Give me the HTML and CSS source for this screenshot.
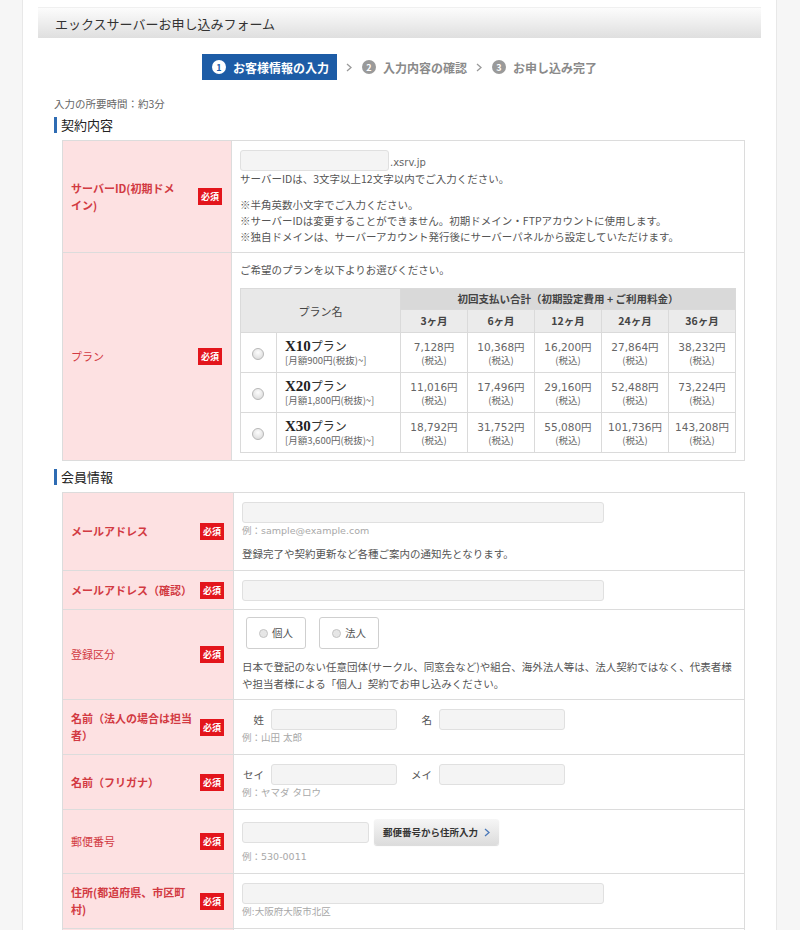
FILE: index.html
```html
<!DOCTYPE html>
<html lang="ja">
<head>
<meta charset="utf-8">
<title>エックスサーバーお申し込みフォーム</title>
<link rel="stylesheet" href="styles.css">
</head>
<body>
<div class="page">
  <main class="panel">
    <h1 class="titlebar">エックスサーバーお申し込みフォーム</h1>

    <ol class="steps">
      <li class="step current"><span class="num">1</span>お客様情報の入力</li>
      <li class="sep"><svg width="6" height="9" viewBox="0 0 6 9"><polyline points="1,1 5,4.5 1,8" fill="none" stroke="#9a9a9a" stroke-width="1.3"/></svg></li>
      <li class="step"><span class="num">2</span>入力内容の確認</li>
      <li class="sep"><svg width="6" height="9" viewBox="0 0 6 9"><polyline points="1,1 5,4.5 1,8" fill="none" stroke="#9a9a9a" stroke-width="1.3"/></svg></li>
      <li class="step"><span class="num">3</span>お申し込み完了</li>
    </ol>

    <p class="time">入力の所要時間：約3分</p>

    <h2 class="sec">契約内容</h2>
    <table class="form">
      <tr class="r-server">
        <th><div class="lbl"><span class="lbl-text">サーバーID(初期ドメ<br>イン)</span><span class="req">必須</span></div></th>
        <td>
          <div class="inline"><input class="text w149" type="text"><span class="domain">.xsrv.jp</span></div>
          <p>サーバーIDは、3文字以上12文字以内でご入力ください。</p>
          <ul class="notes">
            <li>※半角英数小文字でご入力ください。</li>
            <li>※サーバーIDは変更することができません。初期ドメイン・FTPアカウントに使用します。</li>
            <li>※独自ドメインは、サーバーアカウント発行後にサーバーパネルから設定していただけます。</li>
          </ul>
        </td>
      </tr>
      <tr>
        <th><div class="lbl"><span class="lbl-text normal">プラン</span><span class="req">必須</span></div></th>
        <td class="plan-cell">
          <p>ご希望のプランを以下よりお選びください。</p>
          <table class="plan">
            <colgroup><col class="c-radio"><col class="c-name"><col class="c-p"><col class="c-p"><col class="c-p"><col class="c-p"><col class="c-p"></colgroup>
            <thead>
              <tr class="h1"><th colspan="2" rowspan="2" class="pname">プラン名</th><th colspan="5" class="group">初回支払い合計（初期設定費用&nbsp;+&nbsp;ご利用料金）</th></tr>
              <tr class="h2"><th>3ヶ月</th><th>6ヶ月</th><th>12ヶ月</th><th>24ヶ月</th><th>36ヶ月</th></tr>
            </thead>
            <tbody>
              <tr>
                <td class="rad"><span class="radio"></span></td>
                <td class="name"><div><b class="x">X10</b><span class="pl-name">プラン</span></div><div class="sub">[月額900円(税抜)~]</div></td>
                <td class="price">7,128円<span>(税込)</span></td>
                <td class="price">10,368円<span>(税込)</span></td>
                <td class="price">16,200円<span>(税込)</span></td>
                <td class="price">27,864円<span>(税込)</span></td>
                <td class="price">38,232円<span>(税込)</span></td>
              </tr>
              <tr>
                <td class="rad"><span class="radio"></span></td>
                <td class="name"><div><b class="x">X20</b><span class="pl-name">プラン</span></div><div class="sub">[月額1,800円(税抜)~]</div></td>
                <td class="price">11,016円<span>(税込)</span></td>
                <td class="price">17,496円<span>(税込)</span></td>
                <td class="price">29,160円<span>(税込)</span></td>
                <td class="price">52,488円<span>(税込)</span></td>
                <td class="price">73,224円<span>(税込)</span></td>
              </tr>
              <tr>
                <td class="rad"><span class="radio"></span></td>
                <td class="name"><div><b class="x">X30</b><span class="pl-name">プラン</span></div><div class="sub">[月額3,600円(税抜)~]</div></td>
                <td class="price">18,792円<span>(税込)</span></td>
                <td class="price">31,752円<span>(税込)</span></td>
                <td class="price">55,080円<span>(税込)</span></td>
                <td class="price">101,736円<span>(税込)</span></td>
                <td class="price">143,208円<span>(税込)</span></td>
              </tr>
            </tbody>
          </table>
        </td>
      </tr>
    </table>

    <h2 class="sec sec2">会員情報</h2>
    <table class="form member">
      <tr>
        <th><div class="lbl"><span class="lbl-text">メールアドレス</span><span class="req">必須</span></div></th>
        <td>
          <input class="text w362" type="text">
          <p class="ex">例：sample@example.com</p>
          <p class="desc">登録完了や契約更新など各種ご案内の通知先となります。</p>
        </td>
      </tr>
      <tr>
        <th><div class="lbl"><span class="lbl-text">メールアドレス（確認）</span><span class="req">必須</span></div></th>
        <td><input class="text w362" type="text"></td>
      </tr>
      <tr>
        <th><div class="lbl"><span class="lbl-text normal">登録区分</span><span class="req">必須</span></div></th>
        <td class="kind">
          <div class="choices">
            <label class="choice"><span class="dot"></span>個人</label>
            <label class="choice"><span class="dot"></span>法人</label>
          </div>
          <p class="kind-note">日本で登記のない任意団体(サークル、同窓会など)や組合、海外法人等は、法人契約ではなく、代表者様<br>や担当者様による「個人」契約でお申し込みください。</p>
        </td>
      </tr>
      <tr>
        <th><div class="lbl"><span class="lbl-text">名前（法人の場合は担当<br>者）</span><span class="req">必須</span></div></th>
        <td>
          <div class="pair"><span class="pl">姓</span><input class="text w126" type="text"><span class="pl pl2">名</span><input class="text w126" type="text"></div>
          <p class="ex">例：山田 太郎</p>
        </td>
      </tr>
      <tr>
        <th><div class="lbl"><span class="lbl-text">名前（フリガナ）</span><span class="req">必須</span></div></th>
        <td>
          <div class="pair"><span class="pl">セイ</span><input class="text w126" type="text"><span class="pl pl2">メイ</span><input class="text w126" type="text"></div>
          <p class="ex">例：ヤマダ タロウ</p>
        </td>
      </tr>
      <tr>
        <th><div class="lbl"><span class="lbl-text normal">郵便番号</span><span class="req">必須</span></div></th>
        <td>
          <div class="zip"><input class="text w127" type="text"><button class="zipbtn" type="button">郵便番号から住所入力<svg width="6" height="9" viewBox="0 0 6 9"><polyline points="1,1 5,4.5 1,8" fill="none" stroke="#4a78b8" stroke-width="1.3"/></svg></button></div>
          <p class="ex zip-ex">例：530-0011</p>
        </td>
      </tr>
      <tr>
        <th><div class="lbl"><span class="lbl-text">住所(都道府県、市区町<br>村)</span><span class="req">必須</span></div></th>
        <td>
          <input class="text w362" type="text">
          <p class="ex">例:大阪府大阪市北区</p>
        </td>
      </tr>
      <tr class="next">
        <th></th>
        <td></td>
      </tr>
    </table>
  </main>
</div>
</body>
</html>
```

FILE: styles.css
```css
* { box-sizing: border-box; }
html, body { margin: 0; padding: 0; }
body {
  background: #fff;
  font-family: "Noto Sans CJK JP", "Noto Sans", sans-serif;
  color: #555;
}
.page {
  height: 930px;
  overflow: hidden;
  background: #f6f6f6;
}
.panel {
  display: block;
  margin-left: 22px;
  width: 755px;
  height: 100%;
  background: #fff;
  border-left: 1px solid #e8e8e8;
  border-right: 1px solid #e8e8e8;
  padding: 7px 15px 0 15px;
}
.titlebar {
  margin: 0;
  height: 31px;
  line-height: 31px;
  padding-left: 17px;
  font-size: 13px;
  font-weight: normal;
  color: #333;
  background: linear-gradient(#fcfcfc, #dfdfdf);
  border-top: 1px solid #f0f0f0;
}
.steps {
  list-style: none;
  margin: 16px 0 0;
  padding: 0;
  display: flex;
  justify-content: center;
  align-items: center;
  height: 26px;
}
.step {
  display: flex;
  align-items: center;
  gap: 7px;
  font-size: 12px;
  font-weight: bold;
  color: #8a8a8a;
  height: 26px;
}
.step.current {
  background: #1d5ca6;
  color: #fff;
  padding: 0 8px 0 10px;
}
.num {
  width: 14px;
  height: 14px;
  border-radius: 50%;
  background: #9a9a9a;
  color: #fff;
  font-size: 9px;
  font-weight: bold;
  display: inline-flex;
  align-items: center;
  justify-content: center;
  line-height: 1;
}
.current .num { background: #fff; color: #1d5ca6; }
.sep { display: flex; align-items: center; margin: 0 10px 0 9px; }

.time {
  margin: 17px 0 0;
  padding-left: 16px;
  font-size: 10.5px;
  line-height: 14px;
  color: #666;
}
.sec {
  margin: 6px 0 0 16px;
  font-size: 13px;
  line-height: 16px;
  font-weight: normal;
  color: #222;
  border-left: 3px solid #2f6cb3;
  padding-left: 4px;
}
.sec2 { margin-top: 8px; }

.form {
  margin: 7px 0 0 24px;
  width: 683px;
  border-collapse: collapse;
}
.form > tbody > tr > th,
.form > tr > th {
  width: 171px;
  background: #fde1e2;
  border: 1px solid #dcdcdc;
  padding: 0 9px 0 8px;
  vertical-align: middle;
  text-align: left;
}
.form > tbody > tr > td,
.form > tr > td {
  border: 1px solid #dcdcdc;
  padding: 8px 8px 7px 8px;
  vertical-align: top;
  font-size: 10.5px;
  line-height: 16px;
  color: #555;
}
.form.member > tbody > tr > td,
.form.member > tr > td {
  padding: 9px 8px 8px 8px;
}
.lbl {
  display: flex;
  align-items: center;
  justify-content: space-between;
}
.lbl-text {
  font-size: 11px;
  line-height: 17px;
  font-weight: bold;
  color: #d23a42;
  white-space: nowrap;
}
.lbl-text.normal { font-weight: normal; }
.req {
  display: inline-flex;
  align-items: center;
  justify-content: center;
  width: 24px;
  height: 17px;
  background: #e3151c;
  color: #fff;
  font-size: 9px;
  font-weight: bold;
  flex: none;
}
p { margin: 0; }

.text {
  display: block;
  height: 21px;
  margin: 0;
  padding: 0 6px;
  background: #f4f4f4;
  border: 1px solid #e0e0e0;
  border-radius: 3px;
  font: inherit;
}
.w149 { width: 149px; }
.w362 { width: 362px; }
.w126 { width: 126px; }
.w127 { width: 127px; }

.inline { display: flex; align-items: center; }
.domain {
  font-family: "DejaVu Sans", sans-serif;
  font-size: 10px;
  color: #666;
  margin-left: 1px;
  padding-top: 6px;
}
.notes { list-style: none; margin: 10px 0 0; padding: 0; }

.plan-cell p { margin-top: 1px; }
.plan {
  margin-top: 10px;
  width: 100%;
  border-collapse: collapse;
  table-layout: fixed;
}
.c-radio { width: 36px; }
.c-name { width: 124px; }
.c-p { width: 67px; }
.plan th, .plan td {
  border: 1px solid #dadada;
  text-align: center;
  font-size: 10.5px;
  padding: 0;
}
.plan th { color: #444; }
.plan .pname { background: #e8e8e8; font-weight: normal; font-size: 11px; }
.plan .group { background: #d9d9d9; height: 21px; font-weight: bold; }
.plan .h2 th { background: #ebebeb; height: 23px; font-weight: bold; }
.plan tbody td { height: 40px; }
.rad { text-align: center; }
.radio {
  display: inline-block;
  width: 12px;
  height: 12px;
  border-radius: 50%;
  border: 1px solid #b8b8b8;
  background: radial-gradient(circle at 50% 35%, #fdfdfd, #d6d6d6);
  vertical-align: middle;
}
.plan td.name { text-align: left; padding-left: 8px; line-height: 14px; }
.x {
  font-family: "Liberation Serif", serif;
  font-size: 15px;
  font-weight: bold;
  color: #222;
}
.pl-name { font-size: 12px; color: #333; }
.sub { font-size: 9.5px; color: #666; line-height: 13px; }
.price {
  font-family: "DejaVu Sans", "Noto Sans CJK JP", sans-serif;
  font-size: 10.5px;
  line-height: 14px;
  color: #666;
}
.price span {
  display: block;
  font-family: "Noto Sans CJK JP", sans-serif;
  font-size: 9.5px;
  line-height: 12px;
}

.ex {
  font-family: "DejaVu Sans", "Noto Sans CJK JP", sans-serif;
  font-size: 9.5px;
  line-height: 16px;
  color: #a8a8a8;
}
.desc { margin-top: 7px; }

.form.member td.kind { padding-top: 7px; padding-bottom: 7px; }
.choices { display: flex; gap: 13px; margin-left: 4px; }
.choice {
  width: 60px;
  height: 32px;
  border: 1px solid #cfcfcf;
  border-radius: 3px;
  display: flex;
  align-items: center;
  justify-content: center;
  gap: 4px;
  font-size: 10.5px;
  color: #555;
}
.dot {
  width: 9px;
  height: 9px;
  border-radius: 50%;
  border: 1px solid #c4c4c4;
  background: #e6e6e6;
}
.kind-note { margin-top: 9px; line-height: 17px; }

.pair { display: flex; align-items: center; }
.pl {
  width: 22px;
  text-align: right;
  margin-right: 7px;
  font-size: 10.5px;
  color: #555;
  white-space: nowrap;
}
.pl2 { margin-left: 12px; width: 23px; }

.zip { display: flex; align-items: center; gap: 5px; }
.zipbtn {
  width: 125px;
  height: 26px;
  border: none;
  border-radius: 3px;
  background: linear-gradient(#f6f6f6, #dcdcdc);
  box-shadow: 0 1px 1px rgba(0,0,0,0.15);
  font-family: "Noto Sans CJK JP", sans-serif;
  font-size: 9.5px;
  font-weight: bold;
  color: #333;
  display: flex;
  align-items: center;
  justify-content: center;
  gap: 6px;
  padding: 0;
}
.zip-ex { margin-top: 4px; }

.next th, .next td { height: 30px; }
```
